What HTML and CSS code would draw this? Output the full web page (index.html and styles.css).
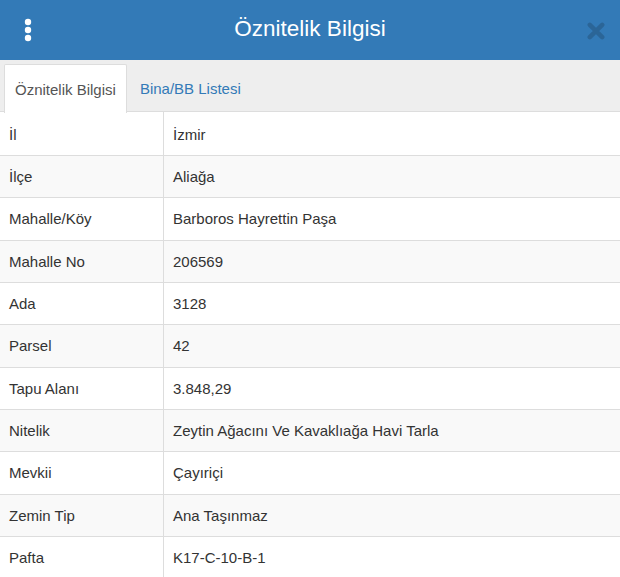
FILE: index.html
```html
<!DOCTYPE html>
<html lang="tr">
<head>
    <meta charset="UTF-8">
    <title>Öznitelik Bilgisi</title>
    <link rel="stylesheet" href="styles.css">
</head>
<body>
    <div class="panel">
        <div class="panel-header">
            <span class="menu-btn">
                <svg width="8" height="24" viewBox="0 0 8 24">
                    <circle cx="4" cy="4" r="3.2" fill="#fff"/>
                    <circle cx="4" cy="12" r="3.2" fill="#fff"/>
                    <circle cx="4" cy="20" r="3.2" fill="#fff"/>
                </svg>
            </span>
            <h2 class="panel-title">Öznitelik Bilgisi</h2>
            <span class="close-btn">
                <svg width="18" height="18" viewBox="0 0 16 16">
                    <path d="M2.5 2.5 L13.5 13.5 M13.5 2.5 L2.5 13.5" stroke="#2b6597" stroke-width="4" stroke-linecap="round"/>
                </svg>
            </span>
        </div>

        <ul class="nav-tabs">
            <li class="active"><a href="#">Öznitelik Bilgisi</a></li>
            <li><a href="#">Bina/BB Listesi</a></li>
        </ul>

        <table class="info-table">
            <tr><th>İl</th><td>İzmir</td></tr>
            <tr><th>İlçe</th><td>Aliağa</td></tr>
            <tr><th>Mahalle/Köy</th><td>Barboros Hayrettin Paşa</td></tr>
            <tr><th>Mahalle No</th><td>206569</td></tr>
            <tr><th>Ada</th><td>3128</td></tr>
            <tr><th>Parsel</th><td>42</td></tr>
            <tr><th>Tapu Alanı</th><td>3.848,29</td></tr>
            <tr><th>Nitelik</th><td>Zeytin Ağacını Ve Kavaklıağa Havi Tarla</td></tr>
            <tr><th>Mevkii</th><td>Çayıriçi</td></tr>
            <tr><th>Zemin Tip</th><td>Ana Taşınmaz</td></tr>
            <tr><th>Pafta</th><td>K17-C-10-B-1</td></tr>
        </table>
    </div>
</body>
</html>
```

FILE: styles.css
```css
body { margin: 0; font-family: "Liberation Sans", Arial, sans-serif; font-size: 15px; color: #333; background: #fff; }
.panel { width: 620px; overflow: hidden; }

.panel-header {
    height: 60px; background: #337ab7; color: #fff;
    display: grid; grid-template-columns: 1fr auto 1fr; align-items: center;
    padding: 0 14px; box-sizing: border-box;
}
.menu-btn { display: flex; padding-left: 10px; }
.panel-title { margin: 0 0 2px; font-size: 22.5px; font-weight: normal; }
.close-btn { display: flex; justify-content: flex-end; margin: 2px 1px 0 0; }

.nav-tabs {
    list-style: none; margin: 0; padding: 4px 0 0 4px;
    background: #eee; border-bottom: 1px solid #ddd;
    display: flex; height: 52px; box-sizing: border-box;
}
.nav-tabs li { margin-right: 2px; margin-bottom: -1px; }
.nav-tabs a {
    display: flex; align-items: center; height: 48px; padding: 0 10px;
    border: 1px solid transparent; border-bottom: 0; border-radius: 2px 2px 0 0;
    color: #337ab7; text-decoration: none; box-sizing: border-box;
}
.nav-tabs li.active a { background: #fff; border-color: #ddd; color: #555; height: 49px; }

.info-table { width: 100%; border-collapse: collapse; }
.info-table th, .info-table td {
    text-align: left; font-weight: normal; vertical-align: middle;
    padding: 11px 9px; line-height: 19.33px; border-top: 1px solid #ddd;
}
.info-table tr:first-child th, .info-table tr:first-child td { border-top: 0; padding-top: 12.67px; }
.info-table th { width: 145px; border-right: 1px solid #ddd; }
.info-table tr:nth-child(even) { background: #f9f9f9; }
```
